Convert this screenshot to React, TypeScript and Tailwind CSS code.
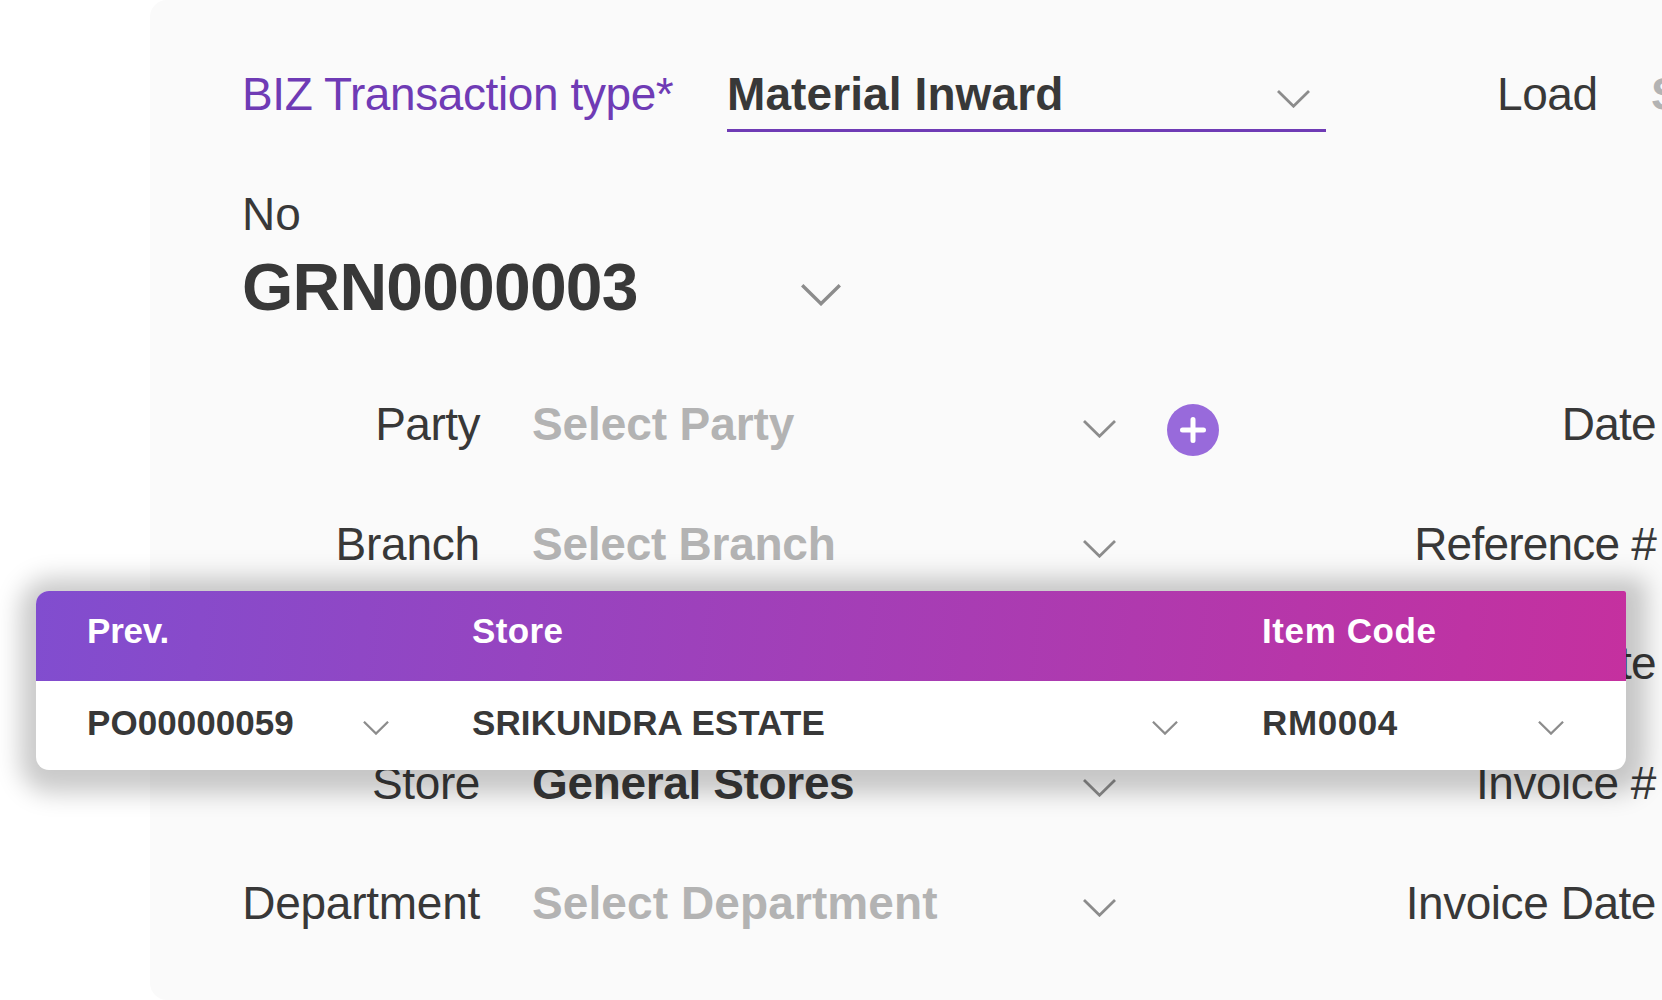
type ChevronProps = { className: string; stroke?: number };

function Chevron({ className, stroke = 2.8 }: ChevronProps) {
  return (
    <svg viewBox="0 0 33 18" className={className} fill="none" stroke="#8c8c8c" strokeWidth={stroke}>
      <path d="M1 1 L16.5 16.2 L32 1" />
    </svg>
  );
}

type Field = {
  label: string;
  labelClass?: string;
  value: string;
  valueClass?: string;
  filled?: boolean;
  add?: boolean;
  right: string;
  rightClass?: string;
  rowClass: string;
};

const fields: Field[] = [
  {
    label: "Party",
    labelClass: "tracking-[-0.5px]",
    value: "Select Party",
    valueClass: "tracking-[-0.1px]",
    add: true,
    right: "Date",
    rightClass: "tracking-[-0.7px]",
    rowClass: "mt-[76px]",
  },
  {
    label: "Branch",
    labelClass: "tracking-[-0.2px]",
    value: "Select Branch",
    valueClass: "tracking-[-0.25px]",
    right: "Reference #",
    rightClass: "tracking-[-0.8px]",
    rowClass: "mt-[70px]",
  },
  { label: "", value: "", right: "Date", rightClass: "tracking-[-0.7px]", rowClass: "mt-[69px]" },
  {
    label: "Store",
    labelClass: "tracking-[-0.4px]",
    value: "General Stores",
    valueClass: "tracking-[-0.35px]",
    filled: true,
    right: "Invoice #",
    rightClass: "tracking-[-0.45px]",
    rowClass: "mt-[70px]",
  },
  {
    label: "Department",
    labelClass: "tracking-[-0.25px]",
    value: "Select Department",
    valueClass: "tracking-[0.1px]",
    right: "Invoice Date",
    rightClass: "tracking-[-0.45px]",
    rowClass: "mt-[70px]",
  },
];

function FieldRow({ field }: { field: Field }) {
  return (
    <div className={`flex h-[50px] ${field.rowClass}`}>
      <div className={`w-[238px] shrink-0 text-right ${field.labelClass ?? ""}`}>{field.label}</div>
      <div
        className={`ml-[51px] w-[552px] shrink-0 pl-px font-bold ${field.filled ? "text-[#383838]" : "text-[#b3b3b3]"} ${field.valueClass ?? ""}`}
      >
        {field.value}
      </div>
      {field.label ? <Chevron className="mt-[21px] h-[18px] w-[33px] shrink-0" /> : <div className="w-[33px] shrink-0" />}
      <div className="w-[104px] shrink-0">
        {field.add && (
          <svg viewBox="0 0 52 52" className="mt-[5px] ml-[51px] size-[52px]">
            <circle cx="26" cy="26" r="26" fill="#986adb" />
            <path d="M26 15.5V36.5M15.5 26H36.5" stroke="#fff" strokeWidth="5" strokeLinecap="round" />
          </svg>
        )}
      </div>
      <div className={`w-[436px] shrink-0 text-right ${field.rightClass ?? ""}`}>{field.right}</div>
    </div>
  );
}

export default function App() {
  return (
    <div className="relative h-[1000px] w-[1662px] overflow-hidden bg-white pl-[150px] font-['Liberation_Sans',Arial,sans-serif] text-[46px] leading-[50px] whitespace-nowrap text-[#383838]">
      <main className="h-full overflow-hidden rounded-l-[17px] bg-[#fafafa] pt-[69px] pl-[92px]">
        <div className="flex h-[63px]">
          <div className="w-[485px] shrink-0 tracking-[-0.4px] text-[#6f3bb5]">BIZ Transaction type*</div>
          <div className="flex w-[599px] shrink-0 justify-between border-b-[3px] border-[#6f3bb5] pr-4">
            <span className="font-bold tracking-[0.1px]">Material Inward</span>
            <Chevron className="mt-[21px] h-[18px] w-[33px]" />
          </div>
          <div className="ml-[171px] w-[154px] shrink-0 tracking-[-0.4px]">Load</div>
          <div className="font-bold text-[#b3b3b3]">Select</div>
        </div>

        <div className="mt-[57px]">No</div>
        <div className="mt-[12px] flex h-[72px] text-[66px] leading-[72px] font-bold">
          <span className="w-[559px] tracking-[-0.8px]">GRN0000003</span>
          <Chevron className="mt-[33px] h-[22px] w-[40px]" />
        </div>

        {fields.map((f, i) => (
          <FieldRow key={i} field={f} />
        ))}
      </main>

      <section className="absolute top-[591px] left-[36px] w-[1590px] rounded-[13px] rounded-tr-[2px] bg-white text-[35px] leading-[40px] font-bold shadow-[2px_5px_24px_18px_rgba(0,0,0,0.21)]">
        <div className="grid h-[90px] grid-cols-[385px_790px_1fr] rounded-tl-[13px] rounded-tr-[2px] bg-[linear-gradient(96deg,#814dcf,#c5309f)] pt-[20px] pl-[51px] text-white">
          <span className="tracking-[-0.2px]">Prev.</span>
          <span className="tracking-[0.35px]">Store</span>
          <span className="tracking-[0.6px]">Item Code</span>
        </div>
        <div className="grid h-[89px] grid-cols-[385px_790px_1fr] pt-[22px] pl-[51px]">
          <div className="flex justify-between pr-[83px]">
            <span className="tracking-[0.05px]">PO00000059</span>
            <Chevron className="mt-[18px] h-[14px] w-[26px]" stroke={2.9} />
          </div>
          <div className="flex justify-between pr-[84px]">
            <span className="tracking-[0.1px]">SRIKUNDRA ESTATE</span>
            <Chevron className="mt-[18px] h-[14px] w-[26px]" stroke={2.9} />
          </div>
          <div className="flex justify-between pr-[62px]">
            <span className="tracking-[0.6px]">RM0004</span>
            <Chevron className="mt-[18px] h-[14px] w-[26px]" stroke={2.9} />
          </div>
        </div>
      </section>
    </div>
  );
}
